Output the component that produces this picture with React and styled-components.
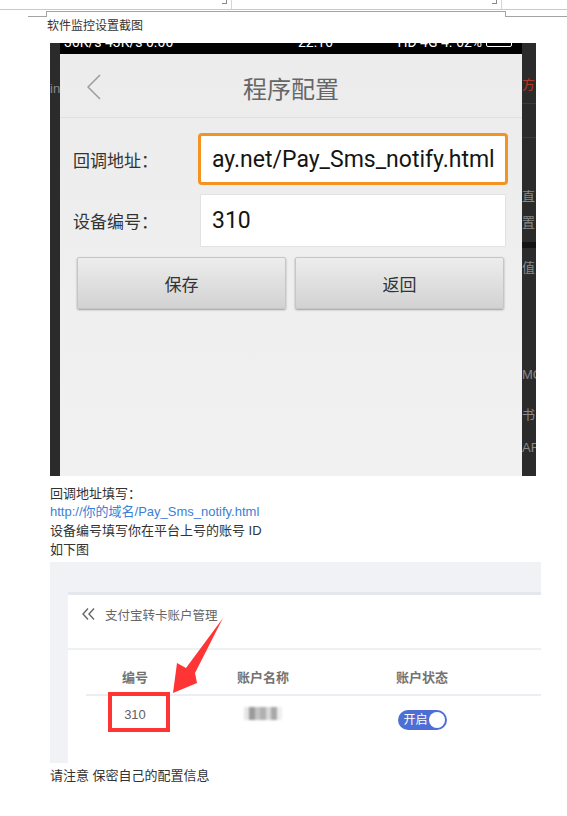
import React from "react";
import styled, { createGlobalStyle } from "styled-components";

const GlobalStyle = createGlobalStyle`
  body {
    margin: 0;
    background: #ffffff;
    font-family: "Liberation Sans", "Noto Sans CJK SC", sans-serif;
  }
`;

// Word-like page chrome
const Ruler = styled.div`
  display: flex;
  height: 9px;
  border-bottom: 1px solid #c9c9c9;
`;

const RulerCell = styled.div`
  position: relative;
  width: ${(p) => (p.$width ? `${p.$width}px` : "auto")};
  flex: ${(p) => (p.$width ? "none" : 1)};
  border-right: ${(p) => (p.$last ? "none" : "1px solid #d6d6d6")};
`;

const CornerMark = styled.span`
  position: absolute;
  right: 4px;
  top: 0;
  width: 4px;
  height: 3px;
  border-right: 1px solid #8a8a8a;
  border-bottom: 1px solid #8a8a8a;
`;

const CropMarks = styled.div`
  display: flex;
  margin-top: 1px;
  padding-left: 28px;
  height: 6px;
`;

const CropSide = styled.div`
  width: ${(p) => (p.$width ? `${p.$width}px` : "auto")};
  flex: ${(p) => (p.$width ? "none" : 1)};
  border-bottom: 1px solid #a3a3a3;
`;

const CropMiddle = styled.div`
  width: 460px;
  box-sizing: border-box;
  border: 1px solid #a3a3a3;
  border-bottom: none;
`;

const DocLine = styled.div`
  margin-left: ${(p) => p.$indent || 50}px;
  margin-top: ${(p) => p.$top || 0}px;
  font-size: ${(p) => p.$size || 13}px;
  line-height: ${(p) => p.$lh || 18.7}px;
  color: ${(p) => (p.$link ? "#3c7fd6" : "#333333")};
  white-space: nowrap;
`;

// Phone screenshot
const PhoneShot = styled.div`
  display: flex;
  margin: 7px 0 0 50px;
  width: 486px;
  height: 433px;
  background: #2b2b2b;
  overflow: hidden;
`;

const SideStrip = styled.div`
  display: flex;
  flex-direction: column;
  width: ${(p) => (p.$width ? `${p.$width}px` : "auto")};
  flex: ${(p) => (p.$width ? "none" : 1)};
  overflow: hidden;
`;

const Fragment = styled.div`
  margin-top: ${(p) => p.$top}px;
  height: 16px;
  font-size: 13px;
  line-height: 16px;
  color: #8a8a8a;
  white-space: nowrap;
`;

const StripRule = styled.div`
  margin-top: ${(p) => p.$top}px;
  height: ${(p) => p.$h || 1}px;
  background: ${(p) => p.$color || "#3d3d3d"};
`;

const Screen = styled.div`
  display: flex;
  flex-direction: column;
  width: 462px;
`;

// only the lower edge of the status text is left in the cropped screenshot
const StatusBar = styled.div`
  display: flex;
  align-items: flex-end;
  justify-content: space-between;
  height: 11px;
  padding: 0 10px 0 4px;
  background: #000;
  overflow: hidden;
  color: #fff;
  font-family: Roboto, sans-serif;
  font-size: 14px;
  line-height: 14px;
`;

const StatusText = styled.span`
  display: flex;
  align-items: center;
  margin-bottom: 5.5px;
  margin-left: ${(p) => p.$left || 0}px;
`;

const Battery = styled.span`
  display: inline-block;
  width: 24px;
  height: 9px;
  margin-left: 4px;
  border: 1px solid #fff;
  border-radius: 2px;
`;

const AppPanel = styled.div`
  flex: 1;
  background: linear-gradient(#ececec, #f1f1f1);
  font-family: Roboto, "Noto Sans CJK SC", sans-serif;
`;

const TitleBar = styled.div`
  display: grid;
  grid-template-columns: 60px 1fr 60px;
  align-items: center;
  height: 63px;
  border-bottom: 1px solid #e0e0e0;
`;

const BackButton = styled.div`
  display: flex;
  padding-left: 27px;
  padding-top: 2px;
`;

const Title = styled.div`
  text-align: center;
  font-size: 24px;
  color: #666;
  padding-top: 3px;
`;

const Form = styled.div`
  display: flex;
  flex-direction: column;
  gap: 9px;
  padding: 15px 14px 0 13px;
`;

const FormRow = styled.div`
  display: flex;
  align-items: center;
`;

const Label = styled.div`
  width: 125px;
  font-size: 17px;
  color: #333;
`;

const Field = styled.div`
  flex: 1;
  box-sizing: border-box;
  height: ${(p) => (p.$focused ? 52 : 53)}px;
  margin: ${(p) => (p.$focused ? "0" : "0 2px")};
  padding-left: 11px;
  display: flex;
  align-items: center;
  border: ${(p) => (p.$focused ? "3px solid #f39323" : "1px solid #e2e2e2")};
  border-radius: ${(p) => (p.$focused ? 4 : 1)}px;
  background: #fff;
  font-size: 23px;
  color: #151515;
  white-space: nowrap;
  overflow: hidden;
`;

const ButtonRow = styled.div`
  display: flex;
  gap: 9px;
  padding: 10px 18px 0 17px;
`;

const PhoneButton = styled.div`
  flex: 1;
  height: 52px;
  box-sizing: border-box;
  display: flex;
  align-items: center;
  justify-content: center;
  background: linear-gradient(#ededed, #d2d2d2);
  border: 1px solid #c6c6c6;
  border-radius: 2px;
  box-shadow: 0 1px 2px rgba(0, 0, 0, 0.35);
  font-size: 17px;
  color: #333;
`;

// Admin screenshot
const AdminShot = styled.div`
  position: relative;
  display: flex;
  margin: 2.7px 0 0 50px;
  width: 491px;
  height: 201px;
  box-sizing: border-box;
  padding: 30px 0 0 18px;
  background: #f0f2f5;
  overflow: hidden;
`;

const Card = styled.div`
  flex: 1;
  background: #fff;
  border-top: 3px solid #e4e7ec;
  font-family: "Liberation Sans", "Noto Sans CJK SC", sans-serif;
`;

const CardHeader = styled.div`
  display: flex;
  align-items: center;
  gap: 10px;
  box-sizing: border-box;
  height: 55px;
  padding: 0 0 15px 14px;
  border-bottom: 2px solid #eff0f2;
  font-size: 12.5px;
  color: #666;
`;

const Table = styled.div`
  margin-left: 18px;
`;

const TableRow = styled.div`
  display: grid;
  grid-template-columns: 98px 158px 160px;
  align-items: start;
  box-sizing: border-box;
  height: ${(p) => (p.$head ? 46 : 60)}px;
  padding-top: ${(p) => (p.$head ? 19 : 10)}px;
  border-bottom: ${(p) => (p.$head ? "2px solid #ebeef3" : "none")};
`;

const Cell = styled.div`
  display: flex;
  justify-content: center;
  margin-top: ${(p) => p.$top || 0}px;
  font-size: 13px;
  line-height: 18px;
  font-weight: ${(p) => (p.$head ? 700 : 400)};
  color: ${(p) => (p.$head ? "#737373" : "#606266")};
`;

const BlurName = styled.div`
  display: flex;
  width: 38px;
  height: 13px;
  filter: blur(1.2px);
`;

const BlurBlock = styled.span`
  flex: 1;
  background: ${(p) => p.$c};
`;

const Toggle = styled.div`
  display: flex;
  align-items: center;
  box-sizing: border-box;
  width: 49px;
  height: 20px;
  padding: 0 2px 0 6px;
  border-radius: 10px;
  background: #4d6fd5;
  color: #fff;
  font-size: 12px;
`;

const Knob = styled.span`
  margin-left: auto;
  width: 16px;
  height: 16px;
  border-radius: 50%;
  background: #fff;
`;

const RedBox = styled.div`
  position: absolute;
  left: 58px;
  top: 130px;
  width: 62px;
  height: 40px;
  box-sizing: border-box;
  border: 4px solid #ff3535;
`;

const Arrow = styled.svg`
  position: absolute;
  left: 120px;
  top: 54px;
`;

const App = () => {
  return (
    <>
      <GlobalStyle />
      <Ruler>
        <RulerCell $width={231}>
          <CornerMark />
        </RulerCell>
        <RulerCell $width={269}>
          <CornerMark />
        </RulerCell>
        <RulerCell $last />
      </Ruler>
      <CropMarks>
        <CropSide $width={18} />
        <CropMiddle />
        <CropSide />
      </CropMarks>

      <DocLine $indent={47} $lh={19} $size={12}>软件监控设置截图</DocLine>

      <PhoneShot>
        <SideStrip $width={10}>
          <Fragment $top={38}>in</Fragment>
        </SideStrip>
        <Screen>
          <StatusBar>
            <StatusText>36K/s 43K/s 0.00</StatusText>
            <StatusText $left={60}>22:16</StatusText>
            <StatusText>
              HD 4G 4. 62%
              <Battery />
            </StatusText>
          </StatusBar>
          <AppPanel>
            <TitleBar>
              <BackButton>
                <svg width="14" height="26" viewBox="0 0 14 26">
                  <polyline
                    points="13,1 1,13 13,25"
                    fill="none"
                    stroke="#9b9b9b"
                    strokeWidth="1.5"
                  />
                </svg>
              </BackButton>
              <Title>程序配置</Title>
              <div />
            </TitleBar>
            <Form>
              <FormRow>
                <Label>回调地址：</Label>
                <Field $focused>ay.net/Pay_Sms_notify.html</Field>
              </FormRow>
              <FormRow>
                <Label>设备编号：</Label>
                <Field>310</Field>
              </FormRow>
            </Form>
            <ButtonRow>
              <PhoneButton>保存</PhoneButton>
              <PhoneButton>返回</PhoneButton>
            </ButtonRow>
          </AppPanel>
        </Screen>
        <SideStrip>
          <Fragment $top={34}>
            <span style={{ color: "#b3392c" }}>方</span> 西
          </Fragment>
          <StripRule $top={10} />
          <StripRule $top={33} />
          <Fragment $top={51}>直</Fragment>
          <Fragment $top={10}>置</Fragment>
          <StripRule $top={11} $h={6} $color="#141414" />
          <Fragment $top={12}>值</Fragment>
          <Fragment $top={91}>MC</Fragment>
          <Fragment $top={24}>书</Fragment>
          <Fragment $top={17}>AR</Fragment>
        </SideStrip>
      </PhoneShot>

      <DocLine $top={8.5}>回调地址填写：</DocLine>
      <DocLine $link>http://你的域名/Pay_Sms_notify.html</DocLine>
      <DocLine>设备编号填写你在平台上号的账号 ID</DocLine>
      <DocLine>如下图</DocLine>

      <AdminShot>
        <Card>
          <CardHeader>
            <svg width="13" height="12" viewBox="0 0 13 12">
              <polyline points="6,0.5 1,6 6,11.5" fill="none" stroke="#666" strokeWidth="1.4" />
              <polyline points="12,0.5 7,6 12,11.5" fill="none" stroke="#666" strokeWidth="1.4" />
            </svg>
            <span>支付宝转卡账户管理</span>
          </CardHeader>
          <Table>
            <TableRow $head>
              <Cell $head>编号</Cell>
              <Cell $head>账户名称</Cell>
              <Cell $head>账户状态</Cell>
            </TableRow>
            <TableRow>
              <Cell>310</Cell>
              <Cell $top={1}>
                <BlurName>
                  <BlurBlock $c="#e6e6e6" />
                  <BlurBlock $c="#9a9a9a" />
                  <BlurBlock $c="#c4c4c4" />
                  <BlurBlock $c="#b0b0b0" />
                  <BlurBlock $c="#d8d8d8" />
                  <BlurBlock $c="#a8a8a8" />
                  <BlurBlock $c="#eeeeee" />
                </BlurName>
              </Cell>
              <Cell $top={4}>
                <Toggle>
                  开启
                  <Knob />
                </Toggle>
              </Cell>
            </TableRow>
          </Table>
        </Card>
        <RedBox />
        <Arrow width="56" height="80" viewBox="0 0 56 80">
          <polygon points="53,2 25,57 27,67 3,77 7,47 16,52" fill="#ff3535" />
        </Arrow>
      </AdminShot>

      <DocLine $top={2.5} $lh={19}>请注意 保密自己的配置信息</DocLine>
    </>
  );
};

export default App;
